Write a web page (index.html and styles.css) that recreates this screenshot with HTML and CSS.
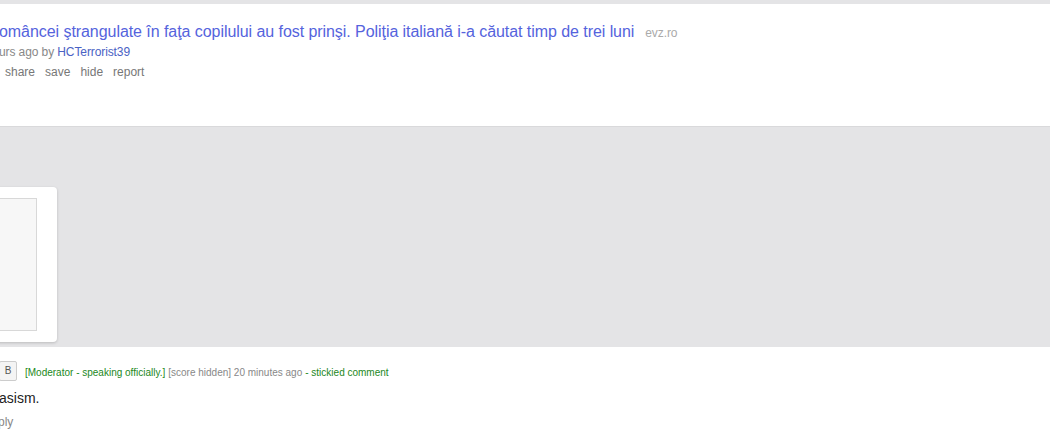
FILE: index.html
```html
<!DOCTYPE html>
<html lang="ro">
<head>
<meta charset="utf-8">
<link rel="stylesheet" href="styles.css">
</head>
<body>
<div class="topbar"></div>
<section class="post">
  <p class="title"><a class="title-link" href="#">omâncei ştrangulate în faţa copilului au fost prinşi. Poliţia italiană i-a căutat timp de trei luni</a><span class="domain">evz.ro</span></p>
  <p class="tagline">urs ago by <a class="author" href="#">HCTerrorist39</a></p>
  <ul class="buttons">
    <li>share</li>
    <li>save</li>
    <li>hide</li>
    <li>report</li>
  </ul>
</section>
<section class="band">
  <div class="card">
    <div class="inner"></div>
  </div>
</section>
<section class="comments">
  <div class="comment-head">
    <span class="badge">B</span>
    <span class="mod">[Moderator - speaking officially.]</span>
    <span class="meta">[score hidden] 20 minutes ago</span>
    <span class="mod">- stickied comment</span>
  </div>
  <p class="comment-body">asism.</p>
  <p class="comment-actions">ply</p>
</section>
</body>
</html>
```

FILE: styles.css
```css
html, body {
  margin: 0;
  padding: 0;
  background: #ffffff;
  overflow: hidden;
  font-family: "Liberation Sans", Arial, sans-serif;
}

.topbar {
  height: 4px;
  background: #e4e4e6;
}

.post {
  height: 122px;
  box-sizing: border-box;
  padding-top: 18px;
  background: #ffffff;
}

.title {
  margin: 0 0 0 -1px;
  font-size: 16px;
  line-height: 20px;
  letter-spacing: -0.06px;
  white-space: nowrap;
}

.title-link {
  color: #5563dd;
  text-decoration: none;
}

.domain {
  margin-left: 11px;
  font-size: 12px;
  letter-spacing: -0.1px;
  color: #aaaaaa;
}

.tagline {
  margin: 2px 0 0 -1px;
  font-size: 12px;
  line-height: 14px;
  letter-spacing: -0.1px;
  color: #888888;
  white-space: nowrap;
}

.author {
  color: #4a62c4;
  text-decoration: none;
}

.buttons {
  display: flex;
  gap: 10px;
  margin: 6px 0 0 5px;
  padding: 0;
  list-style: none;
  font-size: 12px;
  line-height: 14px;
  color: #777777;
}

.band {
  height: 221px;
  box-sizing: border-box;
  background: #e4e4e6;
  border-top: 1px solid #d9d9db;
  padding-top: 60px;
}

.card {
  width: 300px;
  height: 155px;
  box-sizing: border-box;
  margin-left: -243px;
  padding: 11px 20px 11px 11px;
  background: #ffffff;
  border-radius: 4px;
  box-shadow: 0 1px 3px rgba(0, 0, 0, 0.18);
}

.inner {
  height: 100%;
  box-sizing: border-box;
  background: #f7f7f7;
  border: 1px solid #d8d8d8;
}

.comments {
  padding-top: 14px;
}

.comment-head {
  display: flex;
  align-items: center;
  gap: 3px;
  font-size: 10px;
  line-height: 12px;
  white-space: nowrap;
}

.comment-head .mod,
.comment-head .meta {
  padding-top: 3px;
}

.badge {
  width: 18px;
  height: 20px;
  box-sizing: border-box;
  margin-left: -1px;
  margin-right: 5px;
  border: 1px solid #cccccc;
  border-radius: 2px;
  background: #f4f4f4;
  color: #555555;
  font-size: 10px;
  line-height: 18px;
  text-align: center;
}

.mod {
  color: #228822;
}

.meta {
  color: #888888;
}

.comment-body {
  margin: 7px 0 0 -1px;
  font-size: 14px;
  line-height: 20px;
  color: #222222;
}

.comment-actions {
  margin: 7px 0 0 -2px;
  font-size: 12px;
  line-height: 14px;
  color: #888888;
}
```
